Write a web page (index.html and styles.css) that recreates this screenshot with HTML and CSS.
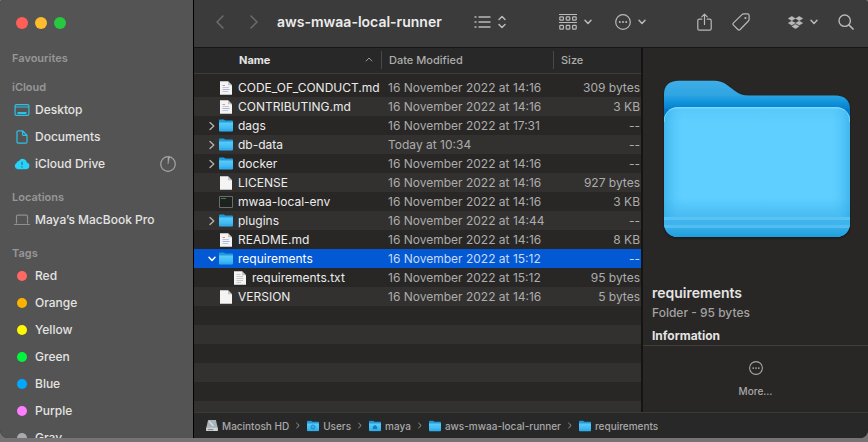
FILE: index.html
```html
<!DOCTYPE html>
<html lang="en-GB">
<head>
<meta charset="utf-8">
<meta name="viewport" content="width=device-width, initial-scale=1">
<title>aws-mwaa-local-runner</title>
<link rel="stylesheet" href="styles.css">
</head>
<body>
<svg class="defs" aria-hidden="true">
  <defs>
    <linearGradient id="g-folder" x1="0" y1="0" x2="0" y2="1"><stop offset="0" stop-color="#5ccbfb"/><stop offset="1" stop-color="#2fb0ee"/></linearGradient>
    <symbol id="folder" viewBox="0 0 14 13"><path d="M0 1.500Q0 .5 1 .5H4.600Q5.200 .5 5.700 1L6.200 1.500H13Q14 1.500 14 2.500V6H0Z" fill="#1f9bd9"/><path d="M0 3.500H14V11.500Q14 12.500 13 12.500H1Q0 12.500 0 11.500Z" fill="url(#g-folder)"/><path d="M0 11H14" stroke="#2ba3de" stroke-width=".6"/></symbol>
    <symbol id="page" viewBox="0 0 12 14"><path d="M0 .3H8L12 4.300V13.700H0Z" fill="#f4f4f4"/><path d="M8 .3V4.300H12Z" fill="#c4c4c4"/></symbol>
    <symbol id="page-md" viewBox="0 0 12 14"><use href="#page"/><path d="M2.500 4.500H5" stroke="#e3929c"/><path d="M2.500 6.500H9M2.500 10.500H8" stroke="#c3c7d0"/><path d="M2.500 8.500H9.500" stroke="#a9b3e4"/></symbol>
    <symbol id="page-txt" viewBox="0 0 12 14"><use href="#page"/><path d="M2.500 3.500H6.500M2.500 5.500H9M2.500 7.500H9.500M2.500 9.500H9M2.500 11.500H7" stroke="#bdbdbd" stroke-width=".8"/></symbol>
    <symbol id="exec" viewBox="0 0 14 12"><path d="M.5 .5H13.500V11.500H.5Z" fill="#1d2220" stroke="#6b6d6c"/><path d="M2 2.500H7" stroke="#2f8a42"/></symbol>
    <symbol id="more" viewBox="0 0 16 16"><circle cx="8" cy="8" r="7.300" fill="none" stroke="currentColor" stroke-width="1.200"/><g fill="currentColor"><circle cx="4.800" cy="8" r="1"/><circle cx="8" cy="8" r="1"/><circle cx="11.200" cy="8" r="1"/></g></symbol>
    <symbol id="down" viewBox="0 0 8 6"><path d="M1 1.200L4 4.400L7 1.200" fill="none" stroke="currentColor" stroke-width="1.500" stroke-linecap="round" stroke-linejoin="round"/></symbol>
    <symbol id="right" viewBox="0 0 6 10"><path d="M1 1.500L4.800 5L1 8.500" fill="none" stroke="currentColor" stroke-width="1.300" stroke-linecap="round" stroke-linejoin="round"/></symbol>
  </defs>
</svg>

<div class="window">
  <aside class="sidebar">
    <div class="lights">
      <button class="light close" aria-label="Close"></button>
      <button class="light minimise" aria-label="Minimise"></button>
      <button class="light expand" aria-label="Full screen"></button>
    </div>
    <nav class="places">
      <section><h2>Favourites</h2></section>
      <section>
        <h2>iCloud</h2>
        <a href="#"><svg class="place-icon" viewBox="0 0 16 14"><g fill="none" stroke="#2fc0e6" stroke-width="1.200"><rect x="1.100" y="1.600" width="13.800" height="10.800" rx="1.200"/><path d="M1 4H15"/></g><path d="M3.500 9H12.500V11H3.500Z" fill="#2fc0e6"/></svg>Desktop</a>
        <a href="#"><svg class="place-icon" viewBox="0 0 16 14"><path d="M3 2Q3 .9 4.100 .9H8.600L13 5.200V12Q13 13.100 11.900 13.100H4.100Q3 13.100 3 12ZM8.500 1V4.300Q8.500 5.300 9.500 5.300H13" fill="none" stroke="#2fc0e6" stroke-width="1.200"/></svg>Documents</a>
        <a href="#"><svg class="place-icon" viewBox="0 0 16 14"><path d="M3.600 12.200A3.300 3.300 0 0 1 2.600 6A2.500 2.500 0 0 1 5 3.900A4.200 4.200 0 0 1 12.800 5.600A3.350 3.350 0 0 1 12.400 12.200Z" fill="#26d3fb"/><path d="M8 4.800V8M8 9.300V10.600" stroke="#3b7482" stroke-width="1.300"/></svg>iCloud Drive<svg class="progress" viewBox="0 0 16 16"><circle cx="8" cy="8" r="7.300" fill="none" stroke="#a5a5a5" stroke-width="1.200"/><path d="M8 8V1H9.600Z" fill="#a5a5a5" stroke="#a5a5a5" stroke-width=".5"/></svg></a>
      </section>
      <section>
        <h2>Locations</h2>
        <a href="#"><svg class="place-icon laptop" viewBox="0 0 16 14"><path d="M2.500 10.500V3.500Q2.500 2.200 3.800 2.200H12.200Q13.500 2.200 13.500 3.500V10.500M0 11.500H16" fill="none" stroke="#8f8f8f" stroke-width="1.200"/></svg>Maya’s MacBook Pro</a>
      </section>
      <section>
        <h2>Tags</h2>
        <a href="#"><span class="dot red"></span>Red</a>
        <a href="#"><span class="dot orange"></span>Orange</a>
        <a href="#"><span class="dot yellow"></span>Yellow</a>
        <a href="#"><span class="dot green"></span>Green</a>
        <a href="#"><span class="dot blue"></span>Blue</a>
        <a href="#"><span class="dot purple"></span>Purple</a>
        <a href="#"><span class="dot gray"></span>Gray</a>
      </section>
    </nav>
  </aside>

  <main class="main">
    <header class="toolbar">
      <div class="nav">
        <button aria-label="Back"><svg width="8" height="14" viewBox="0 0 8 14"><path d="M7 1L1 7L7 13" fill="none" stroke="currentColor" stroke-width="1.500" stroke-linecap="round"/></svg></button>
        <button aria-label="Forward"><svg width="8" height="14" viewBox="0 0 8 14"><path d="M1 1L7 7L1 13" fill="none" stroke="currentColor" stroke-width="1.500" stroke-linecap="round"/></svg></button>
      </div>
      <h1>aws-mwaa-local-runner</h1>
      <div class="tools">
        <button class="view" aria-label="View as list"><svg width="17" height="14" viewBox="0 0 17 14"><path d="M4.500 2H16.500M4.500 7H16.500M4.500 12H16.500M.5 2H2.500M.5 7H2.500M.5 12H2.500" stroke="currentColor" stroke-width="1.300"/></svg><svg width="8" height="14" viewBox="0 0 8 14"><path d="M1 4.500L4 1.500L7 4.500M1 9.500L4 12.500L7 9.500" fill="none" stroke="currentColor" stroke-width="1.500" stroke-linecap="round" stroke-linejoin="round"/></svg></button>
        <button class="group" aria-label="Group by"><svg width="18" height="18" viewBox="0 0 18 18"><g fill="none" stroke="currentColor" stroke-width="1.200"><path d="M0 1.500H18M0 9.500H18"/><rect x=".8" y="3.800" width="3.600" height="3.400" rx=".8"/><rect x="7.200" y="3.800" width="3.600" height="3.400" rx=".8"/><rect x="13.600" y="3.800" width="3.600" height="3.400" rx=".8"/><rect x=".8" y="12.300" width="3.600" height="3.900" rx=".8"/><rect x="7.200" y="12.300" width="3.600" height="3.900" rx=".8"/><rect x="13.600" y="12.300" width="3.600" height="3.900" rx=".8"/></g></svg><svg width="8" height="6"><use href="#down"/></svg></button>
        <button class="action" aria-label="Actions"><svg width="16" height="16"><use href="#more"/></svg><svg width="8" height="6"><use href="#down"/></svg></button>
        <button class="share" aria-label="Share"><svg width="15" height="18" viewBox="0 0 15 18"><path d="M4.800 6.200H2.300Q.8 6.200 .8 7.700V15.700Q.8 17.200 2.300 17.200H12.700Q14.200 17.200 14.200 15.700V7.700Q14.200 6.200 12.700 6.200H10.200M7.500 11.500V1.300M4.800 3.800L7.500 1.100L10.200 3.800" fill="none" stroke="currentColor" stroke-width="1.200" stroke-linecap="round" stroke-linejoin="round"/></svg></button>
        <button class="tag" aria-label="Edit tags"><svg width="18" height="18" viewBox="0 0 18 18"><path d="M10 1.600Q10.700 .9 11.700 .9H15.400Q17.100 .9 17.100 2.600V6.300Q17.100 7.300 16.400 8L8.200 16.500Q7 17.600 5.900 16.500L1.500 12.100Q.4 11 1.500 9.900Z" fill="none" stroke="currentColor" stroke-width="1.200"/><circle cx="13.400" cy="5" r="1.100" fill="currentColor"/></svg></button>
        <button class="dropbox" aria-label="Dropbox"><svg width="15" height="13" viewBox="0 0 15 13"><path d="M3.800 .3L7.500 2.500L3.800 4.700L.1 2.500ZM11.200 .3L14.900 2.500L11.200 4.700L7.500 2.500ZM3.800 4.900L7.500 7.100L3.800 9.300L.1 7.100ZM11.200 4.900L14.900 7.100L11.200 9.300L7.500 7.100ZM7.500 8.200L11.200 10.400L7.500 12.800L3.800 10.400Z" fill="currentColor" stroke="currentColor" stroke-width=".3"/></svg><svg width="8" height="6"><use href="#down"/></svg></button>
        <button class="search" aria-label="Search"><svg width="16" height="16" viewBox="0 0 16 16"><circle cx="6.700" cy="6.700" r="5.700" fill="none" stroke="currentColor" stroke-width="1.400"/><path d="M11 11L15 15" stroke="currentColor" stroke-width="1.700" stroke-linecap="round"/></svg></button>
      </div>
    </header>

    <div class="content">
      <div class="list">
        <table>
          <colgroup><col><col class="col-date"><col class="col-size"></colgroup>
          <thead>
            <tr>
              <th scope="col" class="sorted"><span>Name<svg width="8" height="5" viewBox="0 0 8 5"><path d="M.8 4.300L4 1L7.200 4.300" fill="none" stroke="currentColor"/></svg></span></th>
              <th scope="col"><span>Date Modified</span></th>
              <th scope="col"><span>Size</span></th>
            </tr>
          </thead>
          <tbody>
            <tr><td><div class="file"><i></i><svg class="doc"><use href="#page-md"/></svg>CODE_OF_CONDUCT.md</div></td><td>16 November 2022 at 14:16</td><td>309 bytes</td></tr>
            <tr><td><div class="file"><i></i><svg class="doc"><use href="#page-md"/></svg>CONTRIBUTING.md</div></td><td>16 November 2022 at 14:16</td><td>3 KB</td></tr>
            <tr><td><div class="file"><i><svg class="closed"><use href="#right"/></svg></i><svg class="folder"><use href="#folder"/></svg>dags</div></td><td>16 November 2022 at 17:31</td><td>--</td></tr>
            <tr><td><div class="file"><i><svg class="closed"><use href="#right"/></svg></i><svg class="folder"><use href="#folder"/></svg>db-data</div></td><td>Today at 10:34</td><td>--</td></tr>
            <tr><td><div class="file"><i><svg class="closed"><use href="#right"/></svg></i><svg class="folder"><use href="#folder"/></svg>docker</div></td><td>16 November 2022 at 14:16</td><td>--</td></tr>
            <tr><td><div class="file"><i></i><svg class="doc"><use href="#page"/></svg>LICENSE</div></td><td>16 November 2022 at 14:16</td><td>927 bytes</td></tr>
            <tr><td><div class="file"><i></i><svg class="exec"><use href="#exec"/></svg>mwaa-local-env</div></td><td>16 November 2022 at 14:16</td><td>3 KB</td></tr>
            <tr><td><div class="file"><i><svg class="closed"><use href="#right"/></svg></i><svg class="folder"><use href="#folder"/></svg>plugins</div></td><td>16 November 2022 at 14:44</td><td>--</td></tr>
            <tr><td><div class="file"><i></i><svg class="doc"><use href="#page-md"/></svg>README.md</div></td><td>16 November 2022 at 14:16</td><td>8 KB</td></tr>
            <tr class="selected"><td><div class="file"><i><svg class="open"><use href="#down"/></svg></i><svg class="folder"><use href="#folder"/></svg>requirements</div></td><td>16 November 2022 at 15:12</td><td>--</td></tr>
            <tr><td><div class="file child"><i></i><svg class="doc"><use href="#page-txt"/></svg>requirements.txt</div></td><td>16 November 2022 at 15:12</td><td>95 bytes</td></tr>
            <tr><td><div class="file"><i></i><svg class="doc"><use href="#page"/></svg>VERSION</div></td><td>16 November 2022 at 14:16</td><td>5 bytes</td></tr>
          </tbody>
        </table>
        <div class="stripes"></div>
      </div>

      <aside class="preview">
        <div class="artwork">
          <svg viewBox="0 0 188 160" role="img" aria-label="Folder">
            <defs>
              <linearGradient id="back" x1="0" y1="0" x2="0" y2="30" gradientUnits="userSpaceOnUse"><stop offset="0" stop-color="#40aee6"/><stop offset=".5" stop-color="#2fa5e2"/><stop offset=".75" stop-color="#0e93dc"/><stop offset="1" stop-color="#0579c8"/></linearGradient>
              <linearGradient id="side" x1="0" y1="0" x2="1" y2="0"><stop offset="0" stop-color="#2fa9e6" stop-opacity=".65"/><stop offset=".1" stop-color="#4fc3f7" stop-opacity="0"/><stop offset=".9" stop-color="#4fc3f7" stop-opacity="0"/><stop offset="1" stop-color="#2fa9e6" stop-opacity=".65"/></linearGradient>
              <linearGradient id="front" x1="0" y1="0" x2="0" y2="1"><stop offset="0" stop-color="#58c8fb"/><stop offset=".12" stop-color="#5fcfff"/><stop offset=".7" stop-color="#5fcfff"/><stop offset=".84" stop-color="#48bcf2"/></linearGradient>
              <linearGradient id="foot" x1="0" y1="0" x2="0" y2="1"><stop offset="0" stop-color="#34ade8"/><stop offset="1" stop-color="#1f9edd"/></linearGradient>
              <clipPath id="face"><rect x="1" y="27" width="186" height="130" rx="14"/></clipPath>
              <filter id="shade" x="-5%" y="-5%" width="110%" height="112%"><feDropShadow dx="0" dy="1" stdDeviation="1.500" flood-color="#000" flood-opacity=".5"/></filter>
            </defs>
            <g filter="url(#shade)">
              <path d="M1 142V15Q1 .8 16 .8H51Q58 .8 64 5L72 11Q78 15.500 85 15.500H172Q187 15.500 187 30V142Q187 157 172 157H16Q1 157 1 142Z" fill="url(#back)"/>
              <rect x="1" y="27" width="186" height="130" rx="14" fill="url(#front)"/>
            </g>
            <g clip-path="url(#face)">
              <path d="M1 137H187V140H1Z" fill="#57c3f5"/>
              <path d="M1 140H187V145H1Z" fill="#3fb4ec"/>
              <path d="M1 145H187V148H1Z" fill="#52bdf1"/>
              <path d="M1 148H187V157H1Z" fill="url(#foot)"/>
              <rect x="1" y="27" width="186" height="110" fill="url(#side)"/>
              <path d="M1 42Q1 27.800 15 27.800H173Q187 27.800 187 42" fill="none" stroke="#79d8ff" stroke-width="1.500"/>
            </g>
          </svg>
        </div>
        <div class="details">
          <h2>requirements</h2>
          <p>Folder - 95 bytes</p>
          <h3>Information</h3>
        </div>
        <button class="more"><svg width="14" height="14"><use href="#more"/></svg><span>More…</span></button>
      </aside>
    </div>

    <nav class="path" aria-label="Path">
      <a href="#"><svg width="12" height="13" viewBox="0 0 13 13"><path d="M2.300 .5H10.700L12.700 9V12.500H.3V9Z" fill="#a9b4b9"/><path d="M.3 9H12.700V12.500H.3Z" fill="#d2d5d6"/><path d="M3.500 2L8 7" stroke="#d9e0e2" stroke-width="1.500"/><path d="M2 11H8" stroke="#777"/></svg>Macintosh HD</a>
      <svg class="sep"><use href="#right"/></svg>
      <a href="#"><svg width="12" height="12" viewBox="0 0 14 13"><use href="#folder" width="14" height="13"/><circle cx="7" cy="7.700" r="2.300" fill="none" stroke="#147eb8"/><circle cx="7" cy="7.700" r=".7" fill="#147eb8"/></svg>Users</a>
      <svg class="sep"><use href="#right"/></svg>
      <a href="#"><svg width="12" height="12" viewBox="0 0 14 13"><use href="#folder" width="14" height="13"/><path d="M4.500 7.500L7 5.300L9.500 7.500V10H4.500Z" fill="#147eb8"/></svg>maya</a>
      <svg class="sep"><use href="#right"/></svg>
      <a href="#"><svg width="12" height="12"><use href="#folder"/></svg>aws-mwaa-local-runner</a>
      <svg class="sep"><use href="#right"/></svg>
      <a href="#"><svg width="12" height="12"><use href="#folder"/></svg>requirements</a>
    </nav>
  </main>
</div>
</body>
</html>
```
FILE: styles.css
```css
* { box-sizing: border-box; }

body {
  margin: 0;
  height: 100vh;
  padding-bottom: 4px;
  overflow: hidden;
  background: #757373;
  color: #e4e4e3;
  font: 500 12px/16px Inter, "Liberation Sans", sans-serif;
}

h1, h2, h3, p { margin: 0; }
a { color: inherit; text-decoration: none; }
button { padding: 0; border: 0; background: none; color: inherit; font: inherit; }
svg { display: block; flex: none; }
.defs { position: absolute; width: 0; height: 0; }

.window {
  display: flex;
  height: 100%;
  overflow: hidden;
  border-radius: 4px 4px 8px 8px;
  background: #282726;
}

/* Sidebar */
.sidebar {
  flex: none;
  width: 194px;
  overflow: hidden;
  border-right: 1px solid #000;
  background: #545454;
}
.lights { display: flex; gap: 7px; padding: 17px 16px 20px; }
.light { width: 12px; height: 12px; border-radius: 50%; }
.close { background: #ff5f57; }
.minimise { background: #febc2e; }
.expand { background: #28c840; }

.places { display: flex; flex-direction: column; gap: 11px; padding: 0 17px 0 12px; }
.places h2 { color: #979797; font-size: 11px; font-weight: 600; line-height: 18px; }
.places a { display: flex; align-items: center; gap: 5px; height: 27px; padding-left: 2px; white-space: nowrap; }
.place-icon { width: 16px; height: 14px; }
.progress { width: 16px; height: 16px; margin-left: auto; }
.dot { width: 10px; height: 10px; margin: 0 3px; border-radius: 50%; }
.red { background: #ff6961; }
.orange { background: #ffb300; }
.yellow { background: #fff800; }
.green { background: #00f53d; }
.blue { background: #00a8ff; }
.purple { background: #ff7dff; }
.gray { background: #a9a9b0; }

/* Toolbar */
.main { display: flex; flex: 1; flex-direction: column; min-width: 0; }
.toolbar {
  display: flex;
  flex: none;
  align-items: center;
  height: 48px;
  padding: 0 14px 3px 22px;
  border-bottom: 1px solid #161616;
  background: #3b3b3b;
}
.nav { display: flex; gap: 26px; color: #6c6c6c; }
.toolbar h1 { margin-left: 19px; color: #ececec; font-size: 14px; font-weight: 600; line-height: 20px; white-space: nowrap; }
.tools { display: flex; align-items: center; margin-left: auto; color: #b9b9b9; }
.tools button { display: flex; align-items: center; gap: 7px; }
.group { margin-left: 53px; }
.action { margin-left: 23px; }
.share { margin-left: 51px; }
.tag { margin-left: 20px; }
.dropbox { margin-left: 38px; }
.search { margin-left: 20px; }

/* File list */
.content { display: flex; flex: 1; min-height: 0; }
.list { display: flex; flex: 1; flex-direction: column; min-width: 0; overflow: hidden; }
table { width: 100%; border-collapse: separate; border-spacing: 0; table-layout: fixed; }
.col-date { width: 172px; }
.col-size { width: 88px; }
th {
  height: 26px;
  padding: 0 0 2px;
  border-bottom: 1px solid #3f3e3d;
  background: #282828;
  color: #adadac;
  font-size: 11px;
  font-weight: 500;
  text-align: left;
}
th span { display: flex; align-items: center; justify-content: space-between; height: 18px; padding-left: 7px; border-left: 1px solid #494948; }
th.sorted { color: #e4e4e3; font-weight: 700; }
.sorted span { padding: 0 8px 0 45px; border: 0; }
.sorted svg { color: #9a9a99; }
tbody { font-weight: 400; }
tbody::before { content: ""; display: table-row; height: 4px; }
td { height: 19px; padding: 0 1px 0 7px; color: #adacab; line-height: 19px; white-space: nowrap; }
td:first-child { padding: 0; color: #ececeb; }
td:last-child { text-align: right; }
tbody tr:nth-child(even) { background: #323130; }
tbody tr.selected { background: #0259d3; }
.selected td { color: #c8daf5; }
.selected td:first-child { color: #fff; }

.file { display: flex; align-items: center; height: 19px; padding-left: 12px; }
.file.child { padding-left: 26px; }
.file i { display: flex; flex: none; justify-content: center; width: 12px; color: #b5b5b4; }
.selected i { color: #fff; }
.closed { width: 6px; height: 10px; }
.open { width: 8px; height: 6px; }
.doc { width: 12px; height: 14px; margin: 0 6px 0 2px; }
.folder { width: 14px; height: 13px; margin: 0 5px 0 1px; }
.exec { width: 14px; height: 12px; margin: 0 5px 0 1px; }
.stripes { flex: 1; background: repeating-linear-gradient(#282726 0 19px, #323130 19px 38px); }

/* Preview */
.preview {
  display: flex;
  flex: none;
  flex-direction: column;
  width: 227px;
  border-left: 2px solid #141414;
  background: #282726;
}
.artwork { padding: 32px 17px 0 20px; }
.details { margin-top: auto; padding: 0 9px; }
.details h2 { font-size: 14px; font-weight: 600; line-height: 20px; }
.details p { color: #a3a2a1; line-height: 20px; }
.details h3 { margin-top: 4px; font-size: 12px; font-weight: 700; line-height: 18px; }
.more {
  display: flex;
  flex-direction: column;
  align-items: center;
  gap: 8px;
  height: 67px;
  padding-top: 15px;
  border-top: 1px solid #3f3e3d;
  color: #a9a8a7;
}
.more span { font-size: 10px; }

/* Path bar */
.path {
  display: flex;
  flex: none;
  align-items: center;
  gap: 7px;
  height: 26px;
  padding-left: 12px;
  border-top: 1px solid #3a3a39;
  background: #282828;
  color: #a9a9a8;
  font-size: 10px;
  white-space: nowrap;
}
.path a { display: flex; align-items: center; gap: 4px; }
.sep { width: 4px; height: 7px; }
```
